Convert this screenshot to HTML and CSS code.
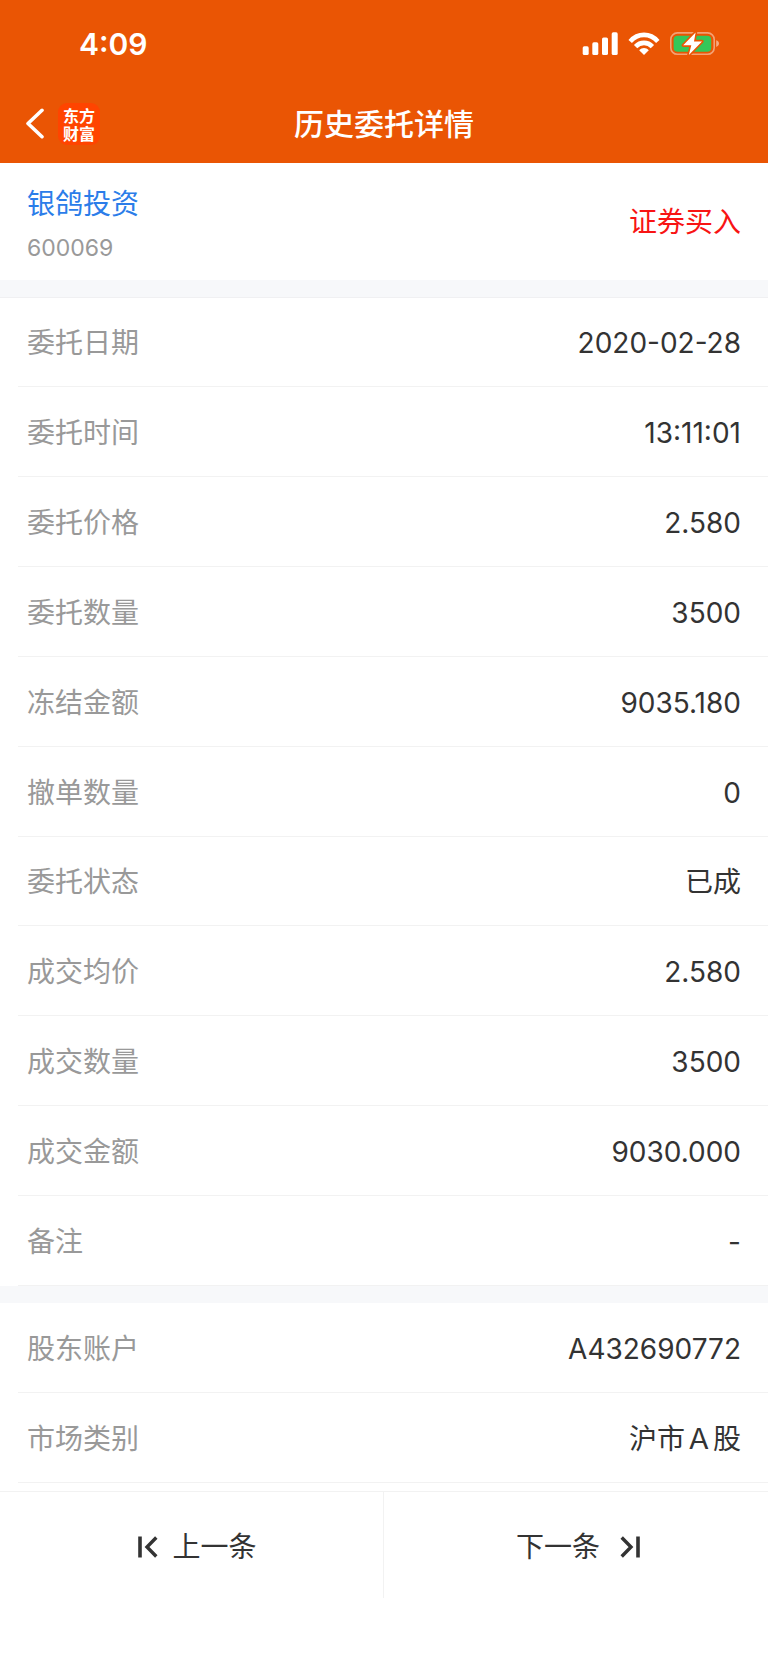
FILE: index.html
```html
<!DOCTYPE html>
<html lang="zh-CN">
<head>
  <meta charset="UTF-8">
  <meta name="viewport" content="width=device-width, initial-scale=1.0">
  <title>历史委托详情</title>
  <link rel="stylesheet" href="styles.css">
</head>
<body>
  <div class="page">
    <header class="header">
      <div class="status-bar">
        <span class="time">4:09</span>
        <div class="status-icons">
          <svg width="36" height="24" viewBox="0 0 36 24" fill="#fff" aria-hidden="true">
            <rect x="0.7" y="14.3" width="6" height="8.7" rx="1.6"/>
            <rect x="10.3" y="10.3" width="6" height="12.7" rx="1.6"/>
            <rect x="20" y="5.6" width="6" height="17.4" rx="1.6"/>
            <rect x="29.7" y="0.3" width="6" height="22.7" rx="1.6"/>
          </svg>
          <svg width="32" height="24" viewBox="0 0 32 24" aria-hidden="true">
            <path d="M2.2 9.4C9.8 0.7 22.2 0.7 29.8 9.4M7.6 14.6C12.3 9.6 19.7 9.6 24.4 14.6" fill="none" stroke="#fff" stroke-width="4.6"/>
            <path d="M11.2 18.2C14 15.4 18 15.4 20.8 18.2L16 23Z" fill="#fff"/>
          </svg>
          <svg width="50" height="24" viewBox="0 0 50 24" aria-hidden="true">
            <rect x="0.8" y="0.9" width="43.4" height="21.4" rx="6.6" fill="none" stroke="#fff" stroke-opacity="0.45" stroke-width="1.6"/>
            <path d="M46.2 8.2C48 8.8 49 10 49 11.6S48 14.4 46.2 15Z" fill="#fff" fill-opacity="0.5"/>
            <rect x="3.6" y="3.7" width="37.6" height="16" rx="4" fill="#34c759"/>
            <path d="M25.6 0.4L13.2 13.3H21.3L18.8 23L32 9.4H24Z" fill="#fff" stroke="#ea5504" stroke-width="3.2" stroke-linejoin="round" paint-order="stroke"/>
          </svg>
        </div>
      </div>
      <nav class="nav">
        <div class="nav-left">
          <a class="back" href="#" aria-label="返回">
            <svg width="20" height="32" viewBox="0 0 20 32" aria-hidden="true">
              <path d="M17 2.3L3 15.5L17 28.7" fill="none" stroke="#fff" stroke-width="3.6" stroke-linecap="round" stroke-linejoin="round"/>
            </svg>
          </a>
          <a class="logo" href="#">东方<br>财富</a>
        </div>
        <h1 class="title">历史委托详情</h1>
      </nav>
    </header>

    <main class="main">
      <section class="stock">
        <div class="stock-info">
          <a class="stock-name" href="#">银鸽投资</a>
          <span class="stock-code">600069</span>
        </div>
        <span class="direction">证券买入</span>
      </section>

      <dl class="list list-order">
        <div class="row"><dt>委托日期</dt><dd>2020-02-28</dd></div>
        <div class="row"><dt>委托时间</dt><dd>13:11:01</dd></div>
        <div class="row"><dt>委托价格</dt><dd>2.580</dd></div>
        <div class="row"><dt>委托数量</dt><dd>3500</dd></div>
        <div class="row"><dt>冻结金额</dt><dd>9035.180</dd></div>
        <div class="row"><dt>撤单数量</dt><dd>0</dd></div>
        <div class="row"><dt>委托状态</dt><dd>已成</dd></div>
        <div class="row"><dt>成交均价</dt><dd>2.580</dd></div>
        <div class="row"><dt>成交数量</dt><dd>3500</dd></div>
        <div class="row"><dt>成交金额</dt><dd>9030.000</dd></div>
        <div class="row"><dt>备注</dt><dd>-</dd></div>
      </dl>

      <dl class="list list-account">
        <div class="row"><dt>股东账户</dt><dd>A432690772</dd></div>
        <div class="row"><dt>市场类别</dt><dd>沪市Ａ股</dd></div>
      </dl>
    </main>

    <footer class="footer">
      <button class="pager prev" type="button">
        <svg width="20" height="22" viewBox="0 0 20 22" fill="none" stroke="#333" aria-hidden="true">
          <path d="M2 0.5V21.5" stroke-width="3.6"/>
          <path d="M18.3 1.5L9 11L18.3 20.5" stroke-width="3.4"/>
        </svg>
        上一条
      </button>
      <button class="pager next" type="button">
        下一条
        <svg width="20" height="22" viewBox="0 0 20 22" fill="none" stroke="#333" aria-hidden="true">
          <path d="M18 0.5V21.5" stroke-width="3.6"/>
          <path d="M1.7 1.5L11 11L1.7 20.5" stroke-width="3.4"/>
        </svg>
      </button>
    </footer>
  </div>
</body>
</html>
```
FILE: styles.css
```css
* {
  box-sizing: border-box;
}

body {
  margin: 0;
  background: #fff;
  color: #333;
  font-family: Inter, "Noto Sans CJK SC", sans-serif;
  font-size: 28px;
  line-height: 40px;
}

a {
  color: inherit;
  text-decoration: none;
}

.page {
  display: flex;
  flex-direction: column;
  min-height: 100vh;
}

/* header */
.header {
  background: #ea5504;
  color: #fff;
}

.status-bar {
  display: flex;
  align-items: center;
  justify-content: space-between;
  height: 87px;
  padding: 0 48px 0 79px;
}

.time {
  font-size: 30px;
  font-weight: 600;
}

.status-icons {
  display: flex;
  gap: 10px;
}

.nav {
  display: grid;
  grid-template-columns: 1fr auto 1fr;
  align-items: center;
  height: 76px;
  padding: 0 25px 2px;
}

.nav-left {
  display: flex;
  align-items: center;
  gap: 13px;
}

.back {
  display: flex;
}

.logo {
  width: 42px;
  height: 42px;
  padding-top: 3px;
  border-radius: 9px;
  background: #ff4400;
  font-family: "Noto Sans CJK SC", sans-serif;
  font-size: 16px;
  font-weight: 700;
  line-height: 18px;
  text-align: center;
}

.title {
  margin: 0;
  font-size: 30px;
  font-weight: 500;
}

/* content */
.main {
  display: flex;
  flex: 1;
  flex-direction: column;
  padding-bottom: 8px;
}

.stock {
  display: flex;
  align-items: center;
  justify-content: space-between;
  height: 117px;
  padding: 0 27px;
}

.stock-info {
  display: flex;
  flex-direction: column;
  gap: 8px;
  padding-top: 4px;
}

.stock-name {
  color: #2b7de9;
}

.stock-code {
  color: #999;
  font-size: 23px;
  line-height: 32px;
}

.direction {
  color: #f81414;
}

.list {
  display: flex;
  flex-direction: column;
  margin: 0;
  border-top: 17px solid #f7f8fa;
  box-shadow: inset 0 1px #f0f0f2, 0 1px #f0f0f2;
}

.list-order {
  flex: 11;
}

.list-account {
  flex: 2;
  box-shadow: none;
}

.row {
  display: flex;
  flex: 1;
  align-items: center;
  justify-content: space-between;
  min-height: 80px;
  margin-left: 18px;
  padding: 3px 27px 0 9px;
  border-bottom: 1px solid #f2f2f2;
}

.row dt {
  color: #999;
}

.row dd {
  margin: 0;
}

/* footer */
.footer {
  display: grid;
  grid-template-columns: 1fr 1fr;
  height: 171px;
  padding-bottom: 64px;
  border-top: 1px solid #f2f2f2;
}

.pager {
  display: flex;
  align-items: center;
  justify-content: center;
  gap: 14px;
  padding: 4px 0 0;
  border: none;
  background: none;
  color: inherit;
  font: inherit;
  cursor: pointer;
}

.prev {
  padding-left: 12px;
  border-right: 1px solid #f2f2f2;
}

.next {
  gap: 20px;
  padding-left: 4px;
}
```
